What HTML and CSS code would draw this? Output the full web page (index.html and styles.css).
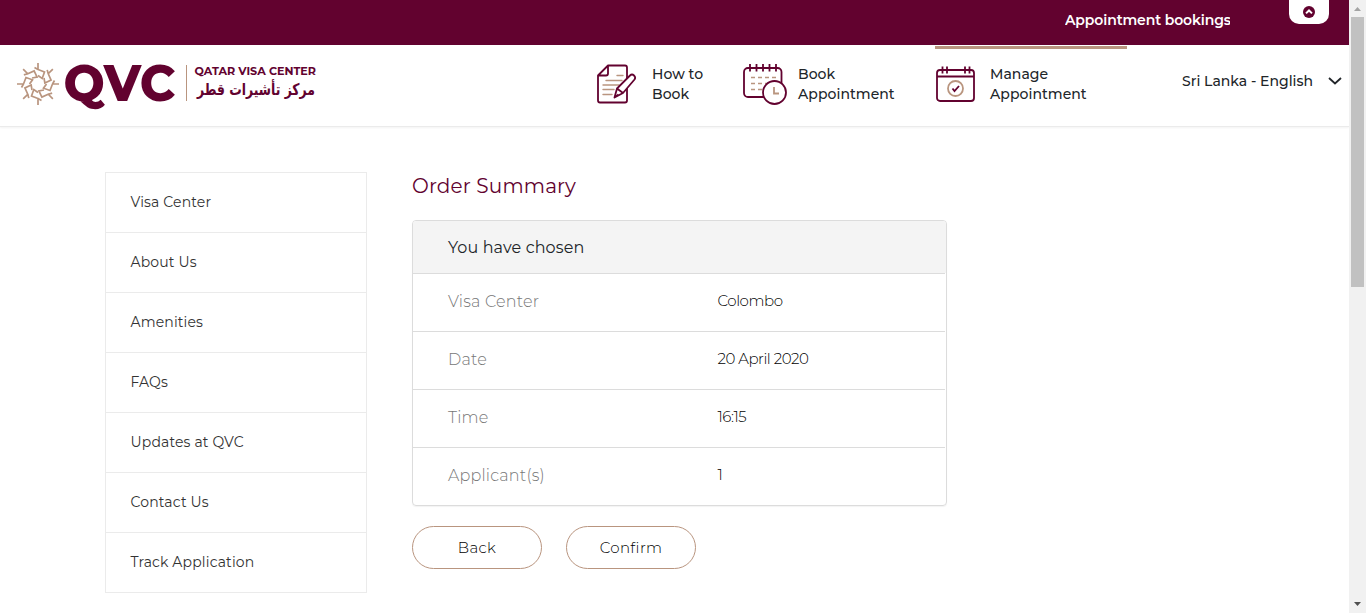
FILE: index.html
```html
<!DOCTYPE html>
<html lang="en">
<head>
<meta charset="utf-8">
<title>Qatar Visa Center</title>
<link rel="stylesheet" href="styles.css">
</head>
<body>
<div class="page">
  <div class="notice">
    <div class="ticker">Appointment bookings</div>
    <div class="collapse">
      <svg width="12" height="12" viewBox="0 0 12 12"><circle cx="6" cy="6" r="6" fill="#62022f"/><path d="M3 7.400 6 4.500l3 2.900" fill="none" stroke="#fff" stroke-width="2"/></svg>
    </div>
  </div>
  <header class="header">
    <svg class="logo" width="304" height="50" viewBox="0 0 304 50">
      <defs><path id="petal" d="M0-21V-14.500L6.500-12 4.200-5.500 0-8.500M0-14.500-3.500-16.500"/></defs>
      <g transform="translate(22 24)" fill="none" stroke="#b9957f" stroke-width="1.700">
        <use href="#petal"/><use href="#petal" transform="rotate(45)"/><use href="#petal" transform="rotate(90)"/><use href="#petal" transform="rotate(135)"/><use href="#petal" transform="rotate(180)"/><use href="#petal" transform="rotate(225)"/><use href="#petal" transform="rotate(270)"/><use href="#petal" transform="rotate(315)"/>
      </g>
      <text class="logo-qvc" x="47.500" y="41" textLength="112" lengthAdjust="spacingAndGlyphs">QVC</text>
      <path d="M170.500 5v36" stroke="#b9957f"/>
      <text class="logo-en" x="178.500" y="14.500" textLength="121.500" lengthAdjust="spacingAndGlyphs">QATAR VISA CENTER</text>
      <text class="logo-ar" x="299" y="35" textLength="118" lengthAdjust="spacingAndGlyphs" direction="rtl">مركز تأشيرات قطر</text>
    </svg>
    <nav class="nav">
      <a class="nav-item how">
        <svg width="40" height="42" viewBox="0 0 40 42" fill="none" stroke="#62022f" stroke-width="1.800" stroke-linejoin="round">
          <path d="M11 2.500h17q2 0 2 2v33q0 2-2 2H3q-2 0-2-2V12.500L11 2.500v8q0 2-2 2H1"/>
          <path d="M20 12.500h6M9 17.500h16M6 22h16M6 26.500h11M6 31.500h9" stroke="#b9957f" stroke-linecap="round" stroke-width="1.400"/>
          <path d="M17.500 34.500l2.500-9L33 12.500q2-2 4 0t.5 4L26 30zM20 25.500l6 4.500M17.500 34.500l4-3" fill="#fff"/>
        </svg>
        <span>How to<br>Book</span>
      </a>
      <a class="nav-item book">
        <svg width="44" height="42" viewBox="0 0 44 42" fill="none" stroke="#62022f" stroke-width="1.800">
          <rect x="1" y="5" width="37.500" height="29" rx="4"/>
          <path d="M7 1v7.500M13.500 1v7.500M20 1v7.500M26.500 1v7.500M33 1v7.500"/>
          <path d="M8 14.500h4M15 14.500h4M22 14.500h4M29 14.500h4M8 20.500h4M15 20.500h4M22 20.500h4M8 26.500h4M15 26.500h4" stroke="#b9957f" stroke-width="1.600"/>
          <circle cx="31.500" cy="29.500" r="11.500" fill="#fff"/>
          <path d="M31 24v6.500h5" stroke="#b9957f"/>
        </svg>
        <span>Book<br>Appointment</span>
      </a>
      <a class="nav-item manage">
        <svg width="40" height="42" viewBox="0 0 40 42" fill="none" stroke="#62022f" stroke-width="1.800">
          <rect x="2" y="7" width="37" height="31" rx="3"/>
          <path d="M2 13.500h37M7.500 3.500v7M12 3.500v7M30 3.500v7M34.500 3.500v7"/>
          <circle cx="20.500" cy="25.500" r="7.500" stroke="#b9957f"/>
          <path d="M17.500 25.500l2 2.500 4.500-5"/>
        </svg>
        <span>Manage<br>Appointment</span>
      </a>
    </nav>
    <div class="language">
      <span>Sri Lanka - English</span>
      <svg width="14" height="8" viewBox="0 0 14 8"><path d="M1 1l6 5.500L13 1" fill="none" stroke="#212529" stroke-width="1.800"/></svg>
    </div>
  </header>
  <main class="content">
    <aside class="side">
      <a>Visa Center</a><a>About Us</a><a>Amenities</a><a>FAQs</a><a>Updates at QVC</a><a>Contact Us</a><a>Track Application</a>
    </aside>
    <section class="summary">
      <h1>Order Summary</h1>
      <div class="card">
        <h2>You have chosen</h2>
        <dl>
          <div class="row"><dt>Visa Center</dt><dd>Colombo</dd></div>
          <div class="row"><dt>Date</dt><dd>20 April 2020</dd></div>
          <div class="row"><dt>Time</dt><dd>16:15</dd></div>
          <div class="row"><dt>Applicant(s)</dt><dd>1</dd></div>
        </dl>
      </div>
      <div class="actions"><button>Back</button><button>Confirm</button></div>
    </section>
  </main>
</div>
<div class="scrollbar">
  <svg width="17" height="17"><path d="M5 11h7L8.500 7z" fill="#a3a3a3"/></svg>
  <div class="thumb"></div>
  <svg class="down" width="17" height="17"><path d="M5 6h7L8.500 10z" fill="#505050"/></svg>
</div>
</body>
</html>
```
FILE: styles.css
```css
* { box-sizing: border-box; }
body { margin: 0; height: 613px; display: flex; overflow: hidden; background: #fff; color: #212529; font-family: Montserrat, Inter, "Open Sans", sans-serif; }
.page { width: 1349px; height: 613px; }
.notice { height: 45px; background: #62022f; display: flex; justify-content: flex-end; }
.ticker { width: 165px; height: 40px; line-height: 40px; margin-right: 59px; overflow: hidden; white-space: nowrap; color: #fff; font-size: 14px; font-weight: 600; letter-spacing: -.12px; }
.collapse { width: 40px; height: 24px; margin-right: 20px; padding-top: 6px; background: #fff; border-radius: 0 0 10px 10px; display: flex; justify-content: center; }
.header { height: 82px; display: flex; border-bottom: 1px solid #ebebeb; box-shadow: 0 1px 2px rgba(0,0,0,.05); }
.logo { margin: 15px 0 0 16px; flex: none; overflow: visible; }
.logo-qvc { font-size: 51px; font-weight: 800; fill: #62022f; }
.logo-en { font-size: 11px; font-weight: 700; fill: #62022f; }
.logo-ar { font-family: "DejaVu Sans", sans-serif; font-size: 16px; font-weight: 700; fill: #62022f; }
.nav { display: flex; margin-left: 277px; }
.nav-item { display: flex; height: 81px; padding-top: 15px; border-top: 3px solid transparent; margin-top: 1px; font-size: 14px; line-height: 20px; font-weight: 500; letter-spacing: .05px; white-space: nowrap; }
.nav-item svg { flex: none; margin-top: -1px; }
.how { width: 146px; }
.how svg { margin-right: 15px; }
.book { width: 192px; }
.book svg { margin-right: 11px; }
.manage { width: 192px; border-top-color: #b9957f; }
.manage svg { margin-right: 15px; }
.language { display: flex; align-items: center; height: 72px; margin: 0 7px 0 auto; font-size: 14px; font-weight: 500; }
.language svg { margin-left: 15px; }
.content { display: flex; padding: 45px 0 0 105px; }
.side { width: 262px; border: 1px solid #ebebeb; border-bottom: 0; }
.side a { display: block; height: 60px; line-height: 59px; padding-left: 24.500px; border-bottom: 1px solid #ebebeb; font-size: 14px; letter-spacing: .15px; color: #333; }
.summary { width: 535px; margin-left: 45px; }
h1 { margin: 0 0 20px; height: 28px; line-height: 28px; font-size: 20px; font-weight: 400; letter-spacing: .15px; color: #62022f; }
.card { height: 286px; border: 1px solid #dcdcdc; border-radius: 4px; box-shadow: 0 1px 1px rgba(0,0,0,.05); overflow: hidden; }
h2 { margin: 0; height: 52px; line-height: 54px; padding-left: 35px; background: #f4f4f4; font-size: 16px; font-weight: 400; letter-spacing: .12px; }
dl { margin: 0 1px 0 0; }
.row { display: flex; height: 58px; padding-left: 35px; border-top: 1px solid #dcdcdc; line-height: 56px; }
dt { width: 269.500px; font-size: 16px; font-weight: 300; letter-spacing: .2px; color: #777; }
dd { margin: 0; line-height: 54px; font-size: 15px; font-weight: 300; letter-spacing: -.45px; color: #000; }
.actions { display: flex; gap: 24px; margin-top: 20px; }
button { width: 130px; height: 43px; border: 1px solid #b9957f; border-radius: 22px; padding: 0; background: #fff; color: #000; font: 300 15px Montserrat, Inter, "Open Sans", sans-serif; letter-spacing: .35px; }
.scrollbar { width: 17px; height: 613px; background: #f1f1f1; display: flex; flex-direction: column; }
.scrollbar svg { flex: none; }
.thumb { width: 13px; height: 270px; margin-left: 2px; background: #c1c1c1; }
.down { margin-top: auto; }
```
